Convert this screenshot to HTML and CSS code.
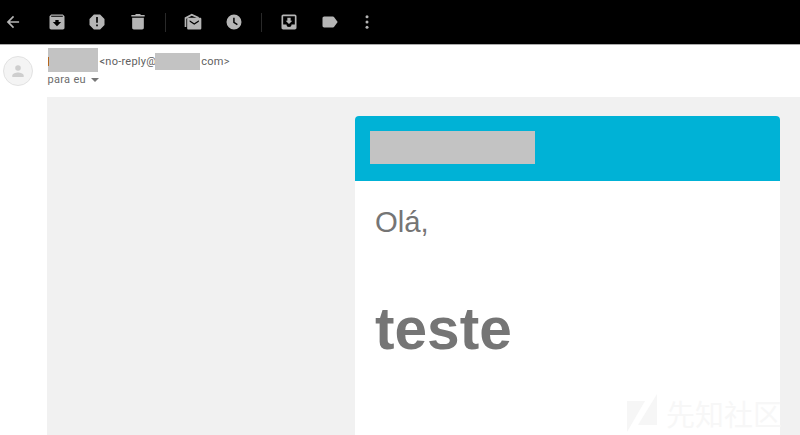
FILE: index.html
```html
<!DOCTYPE html>
<html lang="pt">
<head>
<meta charset="utf-8">
<title>Mensagem</title>
<link rel="stylesheet" href="styles.css">
</head>
<body>
<header class="toolbar">
  <svg class="icon back" viewBox="0 0 24 24"><path d="M19.300 11H8.300l5-5L12 4.500 4.500 12l7.500 7.500 1.300-1.500-5-5h11z"/></svg>
  <svg class="icon archive" viewBox="0 0 24 24"><path fill-rule="evenodd" d="M19 3H5L3 5v14c0 1.100.9 2 2 2h14c1.100 0 2-.9 2-2V5l-2-2zM5 4.500h14v1.200H5zM12 17l-5-5h3V9.500h4V12h3z"/></svg>
  <svg class="icon spam" viewBox="0 0 24 24"><path d="M15.730 3H8.270L3 8.270v7.460L8.270 21h7.460L21 15.730V8.270L15.730 3zM13 17h-2v-2h2v2zm0-4h-2V6h2v7z"/></svg>
  <svg class="icon trash" viewBox="0 0 24 24"><path d="M5 19c0 1.100.9 2 2 2h10c1.100 0 2-.9 2-2V7H5v12zM20 3.500h-4.500l-1-1h-5l-1 1H4v2h16v-2z"/></svg>
  <span class="divider"></span>
  <svg class="icon unread" viewBox="0 0 24 24"><path d="M3.500 18H2V6.500L10.500 2 19 6v1.200h-2.500l-6-2.800L4 8v10z"/><path fill-rule="evenodd" d="M6.500 7h14c1 0 1.500.6 1.500 1.500v11c0 1-.6 1.500-1.500 1.500h-14c-1 0-1.500-.6-1.500-1.500v-11C5 7.600 5.500 7 6.500 7zM8 10v1.800l5.500 3.500 5.500-3.500V10l-5.500 3.400z"/></svg>
  <svg class="icon snooze" viewBox="0 0 24 24"><path fill-rule="evenodd" d="M12 3a9 9 0 1 0 0 18 9 9 0 0 0 0-18zm3.600 12.800L11 13V7h1.800v5l3.700 2.300z"/></svg>
  <span class="divider second"></span>
  <svg class="icon move" viewBox="0 0 24 24"><path fill-rule="evenodd" d="M19 3H5c-1.100 0-2 .9-2 2v14c0 1.100.9 2 2 2h14c1.100 0 2-.9 2-2V5c0-1.100-.9-2-2-2zm0 12h-4a3 3 0 0 1-6 0H5V5h14v10zm-3-4.500h-2V7h-4v3.500H8l4 4z"/></svg>
  <svg class="icon label" viewBox="0 0 24 24"><path d="M17 6.200A2 2 0 0 0 15.500 5.400H5c-1.100 0-2 .9-2 2v9.200c0 1.100.9 2 2 2h10.500c.6 0 1.200-.3 1.500-.8L21.200 12z"/></svg>
  <svg class="icon more" viewBox="0 0 24 24"><circle cx="12" cy="5.700" r="1.800"/><circle cx="12" cy="12" r="1.800"/><circle cx="12" cy="18.300" r="1.800"/></svg>
</header>
<main class="message">
  <div class="avatar"><svg viewBox="0 0 12 12"><circle cx="6" cy="3" r="2.800"/><path d="M.3 12v-1.500C.3 8.500 4 7.500 6 7.500s5.700 1 5.700 3V12z"/></svg></div>
  <section class="content">
    <div class="sender">
      <span class="redacted name"></span>
      <span class="address">&lt;no-reply@</span>
      <span class="redacted domain"></span>
      <span class="address">com&gt;</span>
    </div>
    <div class="recipient">para eu <span class="caret"></span></div>
    <div class="mail">
      <article class="card">
        <div class="banner"><span class="redacted brand"></span></div>
        <p class="greeting">Olá,</p>
        <h1 class="title">teste</h1>
      </article>
    </div>
  </section>
</main>
<div class="watermark">
  <svg viewBox="0 0 30 38"><path d="M0 7h18L0 38zM30 0v31H11z"/></svg>
  <span>先知社区</span>
</div>
</body>
</html>
```
FILE: styles.css
```css
* { box-sizing: border-box; }
body {
  margin: 0;
  height: 435px;
  overflow: hidden;
  position: relative;
  background: #fff;
  font-family: Roboto, sans-serif;
}
.toolbar {
  height: 45px;
  display: flex;
  align-items: center;
  background: #000;
  border-bottom: 1px solid #aaa;
}
.icon { width: 20px; height: 20px; flex: none; fill: #b5b5b5; }
.back { margin-left: 3px; }
.archive { margin-left: 24px; }
.spam { margin-left: 20px; }
.trash { margin-left: 21px; }
.divider { width: 1px; height: 19px; margin-left: 17px; background: #292929; }
.unread { margin-left: 17px; }
.snooze { margin-left: 21px; }
.second { margin-left: 17px; }
.move { margin-left: 17px; }
.label { margin-left: 21px; }
.more { margin-left: 17px; }

.message { display: flex; height: 390px; }
.avatar {
  width: 30px;
  height: 30px;
  margin: 11px 14px 0 3px;
  flex: none;
  display: flex;
  align-items: center;
  justify-content: center;
  border: 1px solid #e2e2e2;
  border-radius: 50%;
  background: #f4f4f4;
}
.avatar svg { width: 12px; height: 12px; fill: #cecece; }
.content { flex: 1; display: flex; flex-direction: column; }
.sender {
  height: 27px;
  padding: 3px 0 0 1px;
  display: flex;
  align-items: flex-start;
  color: #5f5f5f;
  font-size: 11px;
  letter-spacing: .25px;
}
.redacted { background: #c3c3c3; flex: none; }
.name { width: 50px; height: 24px; position: relative; }
.name::before {
  content: "";
  position: absolute;
  left: 0;
  top: 9px;
  width: 1px;
  height: 9px;
  background: #b5661d;
}
.address { line-height: 13px; margin-top: 7px; }
.name + .address { width: 57px; margin-left: 1.500px; white-space: nowrap; }
.domain { width: 45px; height: 17px; margin: 5px 1.300px 0 -1.500px; z-index: 1; }
.recipient {
  height: 25px;
  padding-left: .5px;
  display: flex;
  color: #6c6c6c;
  font-size: 11px;
  line-height: 16px;
  letter-spacing: .3px;
}
.caret {
  width: 0;
  height: 0;
  margin: 6px 0 0 5px;
  border: 4px solid transparent;
  border-top-color: #777;
  border-bottom: 0;
}
.mail { flex: 1; padding: 19px 20px 0 308px; background: #f1f1f1; }
.card { height: 100%; background: #fff; border-radius: 4px 4px 0 0; overflow: hidden; }
.banner { height: 65px; padding: 15px; background: #00b2d6; }
.brand { display: block; width: 165px; height: 33px; }
.greeting {
  margin: 23px 0 0 20px;
  color: #757575;
  font: 29.300px/36px "Liberation Sans", sans-serif;
}
.title {
  margin: 55px 0 0 20px;
  color: #757575;
  font: bold 58.600px/68px "Liberation Sans", sans-serif;
}
.watermark {
  position: absolute;
  left: 627px;
  top: 394px;
  display: flex;
}
.watermark svg { width: 30px; height: 38px; fill: #f6f6f6; }
.watermark span {
  margin-left: 9px;
  font: 29px/38px "Noto Sans CJK SC", sans-serif;
  color: #f7f7f7;
}
```
